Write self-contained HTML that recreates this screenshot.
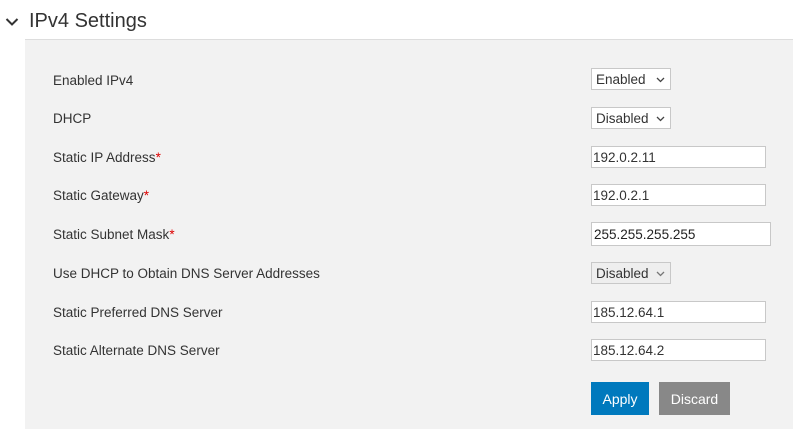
<!DOCTYPE html>
<html><head><style>
body{margin:0;width:793px;height:428px;background:#fff;font-family:"Liberation Sans",sans-serif;position:relative;overflow:hidden;color:#333}
.t{position:absolute;left:29px;top:10px;font-size:20px;color:#333}
.panel{position:absolute;left:25px;top:39px;width:768px;height:389px;background:#f2f2f2;border-top:1px solid #ddd}
.l{position:absolute;left:53px;font-size:13.5px;color:#333;line-height:16px}
.r{color:#d00}
.s{position:absolute;left:591px;width:78px;height:20px;border:1px solid #c8c8c8;background:#fff;font-size:13.5px;line-height:21px;box-sizing:content-box}
.s span{position:absolute;left:4px}
.s svg{position:absolute;right:5px;top:8px}
.i{position:absolute;left:591px;width:172px;height:20px;border:1px solid #c8c8c8;background:#fff;font-size:13.5px;line-height:21px;padding-left:1px;box-sizing:content-box}
.b{position:absolute;top:382px;height:33px;color:#fff;font-size:14px;line-height:34px;text-align:center}
</style></head><body>
<svg style="position:absolute;left:5px;top:17px" width="14" height="10"><path d="M1.5 2 L7 7.5 L12.5 2" fill="none" stroke="#333" stroke-width="2"/></svg>
<div class="t">IPv4 Settings</div>
<div class="panel"></div>
<div class="l" style="top:73px">Enabled IPv4</div>
<div class="l" style="top:111px">DHCP</div>
<div class="l" style="top:150px">Static IP Address<span class="r">*</span></div>
<div class="l" style="top:188px">Static Gateway<span class="r">*</span></div>
<div class="l" style="top:227px">Static Subnet Mask<span class="r">*</span></div>
<div class="l" style="top:266px">Use DHCP to Obtain DNS Server Addresses</div>
<div class="l" style="top:305px">Static Preferred DNS Server</div>
<div class="l" style="top:343px">Static Alternate DNS Server</div>
<div class="s" style="top:68px"><span>Enabled</span><svg width="9" height="6"><path d="M1 1L4.5 4.5L8 1" fill="none" stroke="#444" stroke-width="1.3"/></svg></div>
<div class="s" style="top:107px"><span>Disabled</span><svg width="9" height="6"><path d="M1 1L4.5 4.5L8 1" fill="none" stroke="#444" stroke-width="1.3"/></svg></div>
<div class="i" style="top:146px">192.0.2.11</div>
<div class="i" style="top:184px">192.0.2.1</div>
<div class="i" style="top:222px;width:176px;height:22px;line-height:23px;padding-left:2px;color:#222">255.255.255.255</div>
<div class="s" style="top:262px;background:#eee"><span>Disabled</span><svg width="9" height="6"><path d="M1 1L4.5 4.5L8 1" fill="none" stroke="#777" stroke-width="1.3"/></svg></div>
<div class="i" style="top:301px">185.12.64.1</div>
<div class="i" style="top:339px">185.12.64.2</div>
<div class="b" style="left:591px;width:58px;background:#0079bd">Apply</div>
<div class="b" style="left:659px;width:71px;background:#888">Discard</div>
</body></html>
